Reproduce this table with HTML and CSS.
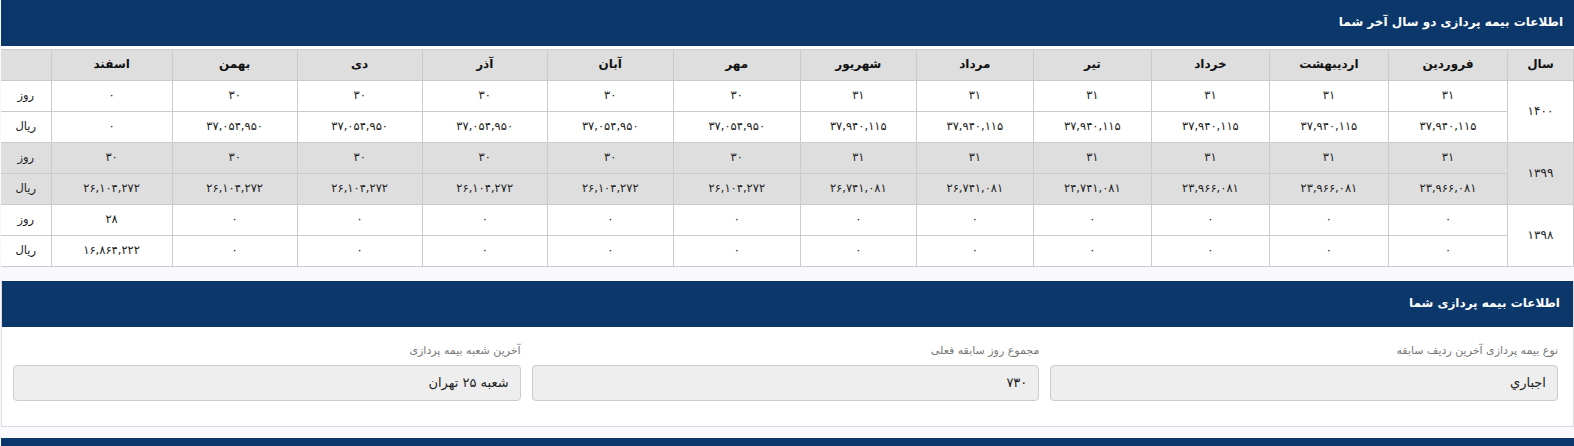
FILE: index.html
```html
<!DOCTYPE html>
<html lang="fa" dir="rtl">
<head>
<meta charset="utf-8">
<title>اطلاعات بیمه پردازی</title>
<link rel="stylesheet" href="styles.css">
</head>
<body>
<div class="page">
  <section class="panel panel-table">
    <div class="panel-head">اطلاعات بیمه پردازی دو سال آخر شما</div>
    <div class="table-wrap">
      <table class="grid">
        <colgroup>
          <col class="c-year"><col class="c-119"><col class="c-119"><col class="c-118"><col class="c-118"><col class="c-117"><col class="c-116"><col class="c-127"><col class="c-126"><col class="c-125"><col class="c-125"><col class="c-125"><col class="c-121"><col class="c-unit">
        </colgroup>
        <thead>
          <tr>
            <th>سال</th><th>فروردین</th><th>اردیبهشت</th><th>خرداد</th><th>تیر</th><th>مرداد</th><th>شهریور</th><th>مهر</th><th>آبان</th><th>آذر</th><th>دی</th><th>بهمن</th><th>اسفند</th><th></th>
          </tr>
        </thead>
        <tbody>
          <tr>
            <td rowspan="2" class="year">۱۴۰۰</td>
            <td>۳۱</td><td>۳۱</td><td>۳۱</td><td>۳۱</td><td>۳۱</td><td>۳۱</td><td>۳۰</td><td>۳۰</td><td>۳۰</td><td>۳۰</td><td>۳۰</td><td>۰</td><td>روز</td>
          </tr>
          <tr>
            <td>۳۷,۹۴۰,۱۱۵</td><td>۳۷,۹۴۰,۱۱۵</td><td>۳۷,۹۴۰,۱۱۵</td><td>۳۷,۹۴۰,۱۱۵</td><td>۳۷,۹۴۰,۱۱۵</td><td>۳۷,۹۴۰,۱۱۵</td><td>۳۷,۰۵۴,۹۵۰</td><td>۳۷,۰۵۴,۹۵۰</td><td>۳۷,۰۵۴,۹۵۰</td><td>۳۷,۰۵۴,۹۵۰</td><td>۳۷,۰۵۴,۹۵۰</td><td>۰</td><td>ریال</td>
          </tr>
          <tr class="alt">
            <td rowspan="2" class="year">۱۳۹۹</td>
            <td>۳۱</td><td>۳۱</td><td>۳۱</td><td>۳۱</td><td>۳۱</td><td>۳۱</td><td>۳۰</td><td>۳۰</td><td>۳۰</td><td>۳۰</td><td>۳۰</td><td>۳۰</td><td>روز</td>
          </tr>
          <tr class="alt">
            <td>۲۳,۹۶۶,۰۸۱</td><td>۲۳,۹۶۶,۰۸۱</td><td>۲۳,۹۶۶,۰۸۱</td><td>۲۴,۷۴۱,۰۸۱</td><td>۲۶,۷۴۱,۰۸۱</td><td>۲۶,۷۴۱,۰۸۱</td><td>۲۶,۱۰۴,۲۷۲</td><td>۲۶,۱۰۴,۲۷۲</td><td>۲۶,۱۰۴,۲۷۲</td><td>۲۶,۱۰۴,۲۷۲</td><td>۲۶,۱۰۴,۲۷۲</td><td>۲۶,۱۰۴,۲۷۲</td><td>ریال</td>
          </tr>
          <tr>
            <td rowspan="2" class="year">۱۳۹۸</td>
            <td>۰</td><td>۰</td><td>۰</td><td>۰</td><td>۰</td><td>۰</td><td>۰</td><td>۰</td><td>۰</td><td>۰</td><td>۰</td><td>۲۸</td><td>روز</td>
          </tr>
          <tr>
            <td>۰</td><td>۰</td><td>۰</td><td>۰</td><td>۰</td><td>۰</td><td>۰</td><td>۰</td><td>۰</td><td>۰</td><td>۰</td><td>۱۶,۸۶۴,۲۲۲</td><td>ریال</td>
          </tr>
        </tbody>
      </table>
    </div>
  </section>

  <section class="panel panel-info">
    <div class="panel-head">اطلاعات بیمه پردازی شما</div>
    <div class="panel-body">
      <div class="field">
        <label class="field-label">نوع بیمه پردازی آخرین ردیف سابقه</label>
        <div class="field-box">اجباري</div>
      </div>
      <div class="field">
        <label class="field-label">مجموع روز سابقه فعلی</label>
        <div class="field-box">۷۳۰</div>
      </div>
      <div class="field">
        <label class="field-label">آخرین شعبه بیمه پردازی</label>
        <div class="field-box">شعبه ۲۵ تهران</div>
      </div>
    </div>
  </section>

  <section class="panel panel-next">
    <div class="panel-head"></div>
  </section>
</div>
</body>
</html>
```

FILE: styles.css
```css
html, body {
  margin: 0;
  padding: 0;
  background: #f8f8fd;
  height: 100%;
  overflow: hidden;
}

body {
  font-family: "DejaVu Sans", "Noto Sans", sans-serif;
  color: #222;
}

.page {
  width: 1574px;
  display: flex;
  flex-direction: column;
}

.panel {
  width: 1573px;
}

.panel-head {
  background: #0b376b;
  color: #fff;
  font-weight: bold;
  font-size: 12px;
  height: 46px;
  line-height: 44px;
  padding: 0 11px 0 0;
  box-sizing: border-box;
}

.table-wrap {
  background: #fff;
  padding-top: 3px;
}

.grid {
  width: 1573px;
  table-layout: fixed;
  border-collapse: collapse;
  font-size: 11.5px;
}

.grid .c-year { width: 66px; }
.grid .c-119 { width: 119px; }
.grid .c-118 { width: 118px; }
.grid .c-117 { width: 117px; }
.grid .c-116 { width: 116px; }
.grid .c-127 { width: 127px; }
.grid .c-126 { width: 126px; }
.grid .c-125 { width: 125px; }
.grid .c-121 { width: 121px; }
.grid .c-unit { width: 50px; }

.grid tr {
  height: 31px;
}

.grid th,
.grid td {
  border: 1px solid #cbcbcb;
  padding: 0;
  text-align: center;
  vertical-align: middle;
}

.grid th {
  background: #dedede;
  font-weight: bold;
  font-size: 12px;
  color: #111;
  padding-bottom: 3px;
}

.grid td {
  background: #fff;
  padding-bottom: 2px;
}

.grid tr.alt td {
  background: #dedede;
}

.grid tr > :last-child {
  border-left: none;
}

.grid td.year {
  font-size: 12px;
}

.panel-table {
  margin-bottom: 14px;
}

.panel-info {
  border: 1px solid #dcdcdc;
  border-top: none;
  box-sizing: border-box;
  margin-bottom: 11px;
}

.panel-info .panel-head {
  padding-right: 13px;
}

.panel-body {
  background: #fff;
  display: grid;
  grid-template-columns: repeat(3, 1fr);
  column-gap: 11px;
  padding: 16px 15px 0 11px;
  height: 99px;
  box-sizing: border-box;
}

.field {
  display: flex;
  flex-direction: column;
}

.field-label {
  font-size: 11px;
  color: #777;
  line-height: 16px;
  margin-bottom: 6px;
}

.field-box {
  height: 36px;
  box-sizing: border-box;
  background: #eee;
  border: 1px solid #ccc;
  border-radius: 4px;
  padding: 0 11px;
  line-height: 34px;
  font-size: 13px;
  color: #222;
}

.panel-next .panel-head {
  height: 20px;
}
```
